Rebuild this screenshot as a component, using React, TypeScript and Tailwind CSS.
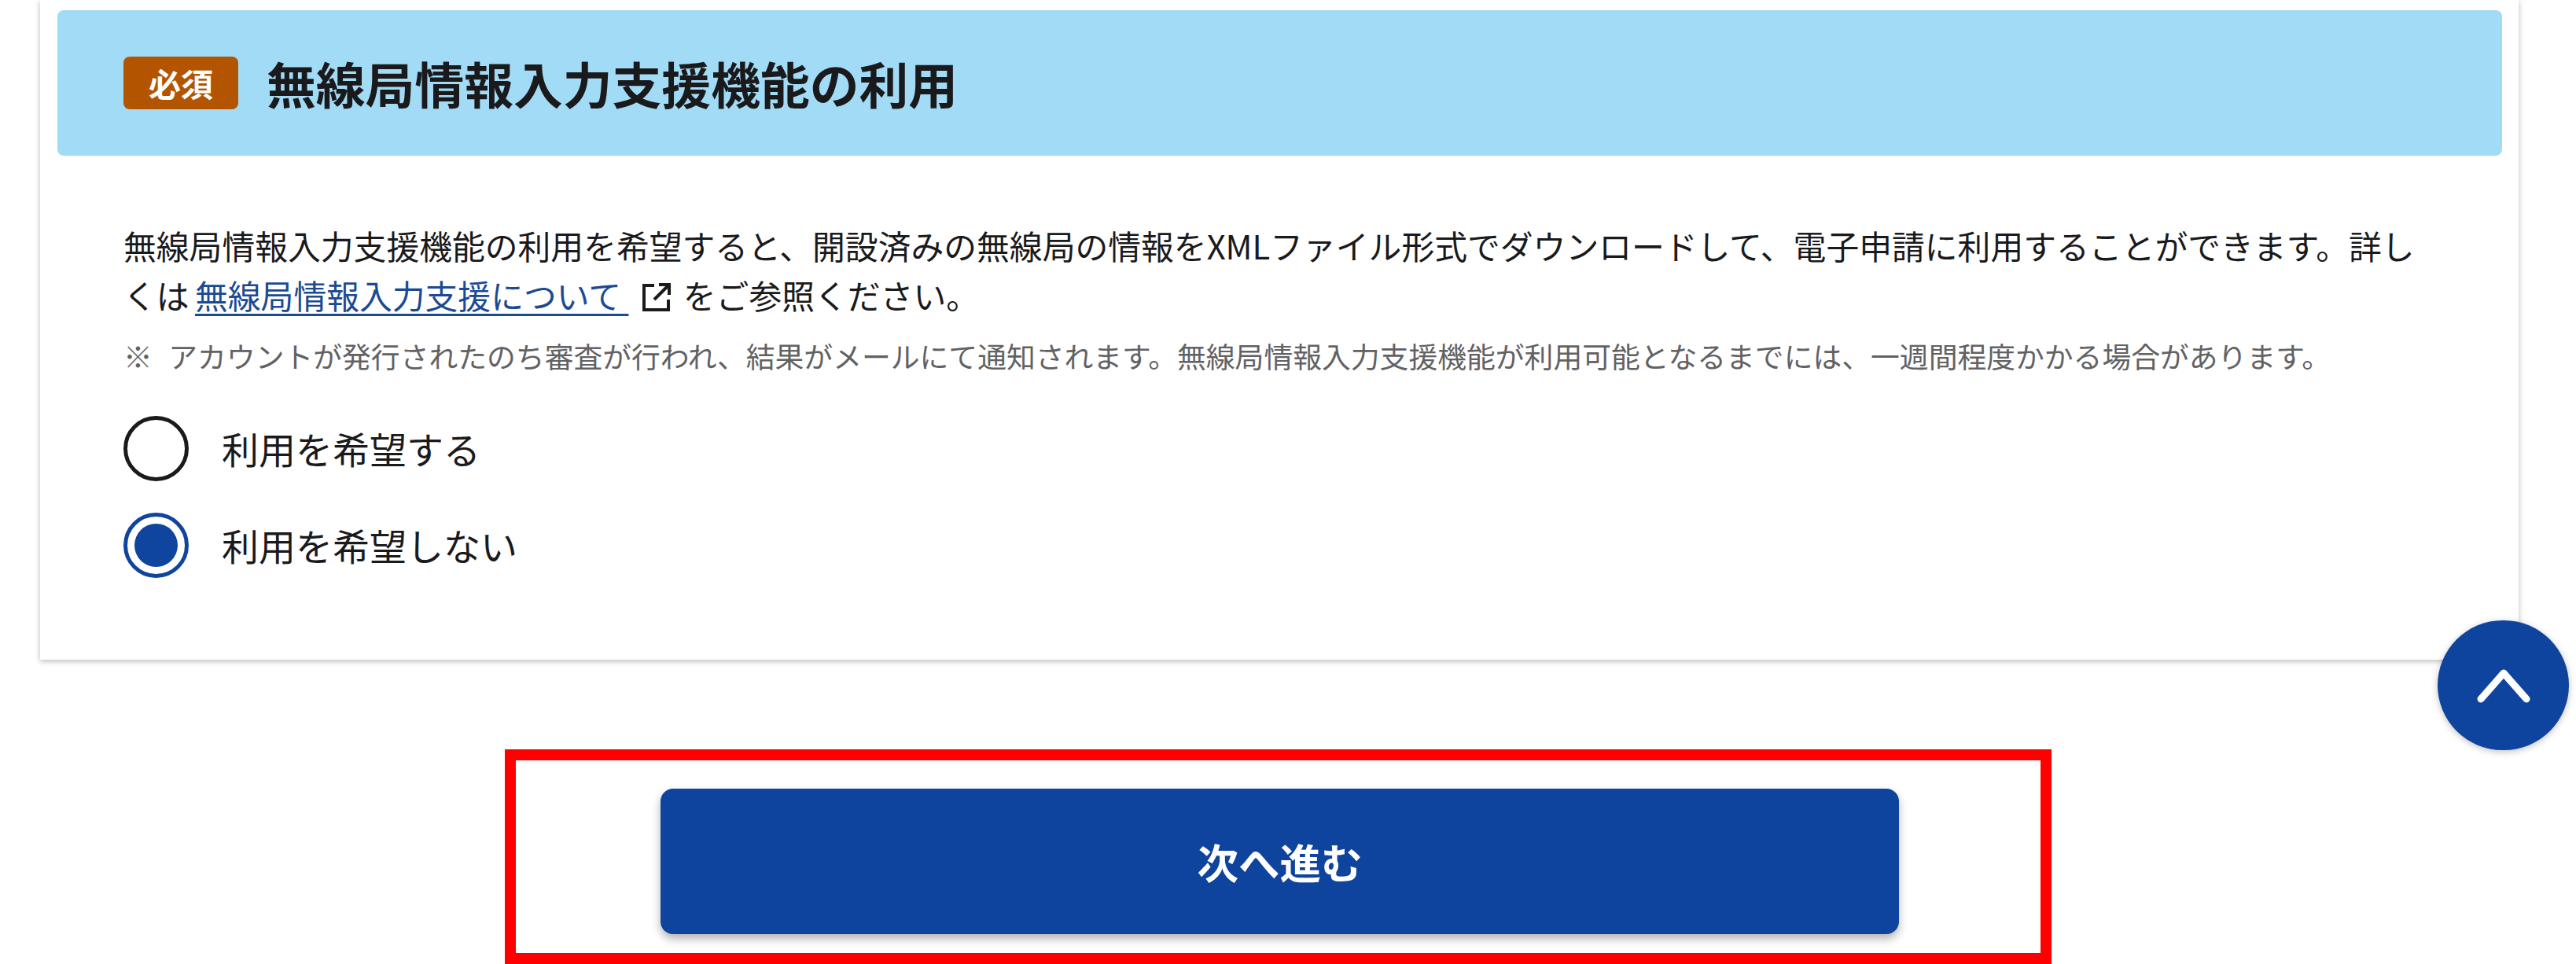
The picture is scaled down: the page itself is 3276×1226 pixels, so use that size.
export default function App() {
  return (
    <div className="relative h-[1226px] w-[3276px] overflow-hidden bg-white font-['Noto_Sans_CJK_JP','Noto_Sans',sans-serif] text-[#1a1a1c]">
      <section className="ml-[51px] h-[839px] w-[3152px] bg-white pt-[13px] pl-[22px] pr-[21px] shadow-[0_2px_7px_rgba(0,0,0,0.28)]">
        <div className="flex h-[185px] items-center gap-[36px] rounded-[8px] bg-[#a2dbf6] pl-[84px]">
          <span className="flex h-[67px] w-[146px] items-center justify-center rounded-[8px] bg-[#b35500] text-[41px] font-bold leading-none text-white">
            必須
          </span>
          <h2 className="text-[62.8px] font-bold leading-none">無線局情報入力支援機能の利用</h2>
        </div>
        <div className="px-[84px] pt-[83px]">
          <p className="text-[41.8px] leading-[63px]">
            無線局情報入力支援機能の利用を希望すると、開設済みの無線局の情報をXMLファイル形式でダウンロードして、電子申請に利用することができます。詳しくは{" "}
            <a className="-ml-[2px] pr-[8px] text-[#1a4a94] underline decoration-[3px] underline-offset-[6px]">無線局情報入力支援について&nbsp;</a>
            <svg viewBox="0 0 36 36" className="mr-[6px] ml-[10px] inline-block h-[36px] w-[36px] align-[-3px]" fill="none" stroke="#1a1a1c" strokeWidth="4">
              <path d="M15 3H2V34H33V21" />
              <path d="M21 2H34V15M33 3L15 21" />
            </svg>
            {" "}をご参照ください。
          </p>
          <p className="mt-[20px] text-[36.8px] leading-[50px] text-[#626264]">
            <span className="mr-[4px]">※&nbsp;</span> アカウントが発行されたのち審査が行われ、結果がメールにて通知されます。無線局情報入力支援機能が利用可能となるまでには、一週間程度かかる場合があります。
          </p>
          <div className="mt-[52px] flex flex-col gap-[41px]">
            <label className="flex h-[82px] items-center gap-[42px] text-[47px]">
              <span className="h-[83px] w-[83px] shrink-0 rounded-full border-[5px] border-[#1a1a1c]" />
              利用を希望する
            </label>
            <label className="flex h-[82px] items-center gap-[42px] text-[47px]">
              <span className="flex h-[83px] w-[83px] shrink-0 items-center justify-center rounded-full border-[5px] border-[#0f459e]">
                <span className="h-[55px] w-[55px] rounded-full bg-[#0f459e]" />
              </span>
              利用を希望しない
            </label>
          </div>
        </div>
      </section>

      <div className="ml-[642px] mt-[114px] h-[273px] w-[1967px] border-[14px] border-[#ff0000] pl-[184px] pt-[36px]">
        <button className="flex h-[185px] w-[1575px] items-center justify-center rounded-[16px] bg-[#0e449e] text-[52.5px] font-bold text-white shadow-[0_6px_12px_rgba(0,0,0,0.3)]">
          次へ進む
        </button>
      </div>

      <button className="absolute left-[3100px] top-[789px] flex h-[165px] w-[167px] items-center justify-center rounded-full bg-[#0e449e] shadow-[0_2px_8px_rgba(0,0,0,0.25)]">
        <svg viewBox="0 0 68 44" className="h-[44px] w-[68px]" fill="none" stroke="white" strokeWidth="9" strokeLinecap="round" strokeLinejoin="round">
          <path d="M5 39L34 6L63 39" />
        </svg>
      </button>
    </div>
  );
}
